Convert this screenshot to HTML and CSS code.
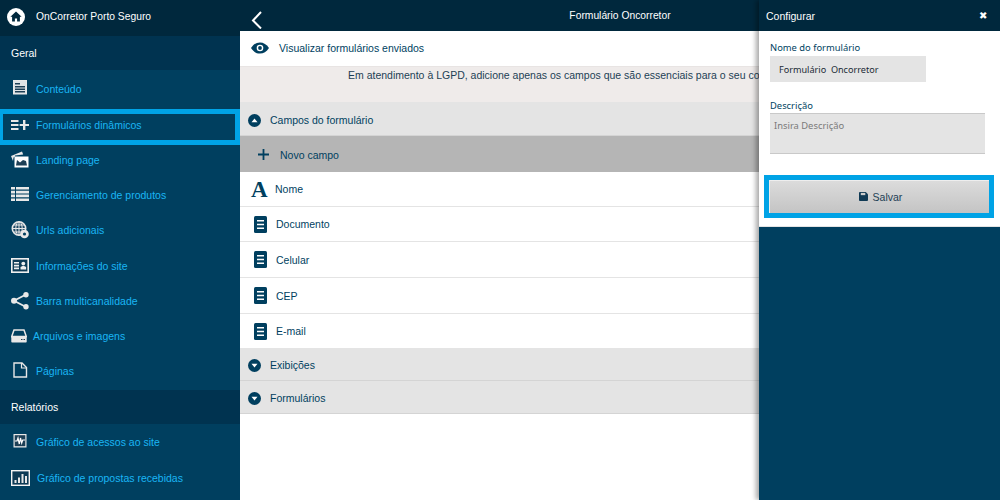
FILE: index.html
```html
<!DOCTYPE html>
<html lang="pt-BR">
<head>
<meta charset="utf-8">
<title>Formulário Oncorretor</title>
<link rel="stylesheet" href="styles.css">
</head>
<body>
<div class="app">
  <aside class="sidebar">
    <div class="brand">
      <svg class="brand-icon" viewBox="0 0 18 18"><circle cx="9" cy="9" r="9" fill="#fff"/><path d="M9 3.6 3.4 8.8h1.7v4.6h2.8v-3h2.2v3h2.8V8.8h1.7z" fill="#00283d"/></svg>
      <span>OnCorretor Porto Seguro</span>
    </div>
    <div class="section">Geral</div>
    <a class="item r-content up"><svg class="ic" viewBox="0 0 18 18"><rect x="2.500" y="0.500" width="13" height="13.500" fill="#dfe3e6" stroke="#e8e8e8"/><path d="M4 3h5v1.500H4zM4 6h10v1.500H4zM4 8.500h10V10H4zM4 11h10v1.500H4z" fill="#1d3f55"/></svg><span>Conteúdo</span></a>
    <a class="item active"><svg class="ic" viewBox="0 0 18 18"><path d="M0 4h7.500v1.900H0zM0 8h7.500v1.900H0zM0 12h7.500v1.900H0zM12 4h2.400v3.900H18v2.100h-3.600V14H12V10H8.600V7.900H12z" fill="#e8e8e8"/></svg><span>Formulários dinâmicos</span></a>
    <a class="item r-landing up"><svg class="ic" viewBox="0 0 18 18"><path d="M0 5 11 0.500l1.200 3L4 4.500v1L2.500 6.500 2 10z" fill="#e8e8e8"/><rect x="3.500" y="5.500" width="14" height="11" fill="#fff"/><path d="M5 14.500 6 9l3 2.500L12 9l3 1 1 4.500z" fill="#1d3f55"/></svg><span>Landing page</span></a>
    <a class="item r-products"><svg class="ic" viewBox="0 0 18 18"><path d="M0 1h4v2.600H0zM5 1h13v2.600H5zM0 4.800h4v2.600H0zM5 4.800h13v2.600H5zM0 8.600h4v2.600H0zM5 8.600h13v2.600H5zM0 12.400h4V15H0zM5 12.400h13V15H5z" fill="#e8e8e8"/></svg><span>Gerenciamento de produtos</span></a>
    <a class="item r-35 up"><svg class="ic" viewBox="0 0 18 18"><circle cx="8" cy="7.500" r="6.700" fill="#1d4a66" stroke="#e8e8e8" stroke-width="1.600"/><path d="M1.500 7.500h13M8 1v13M2.700 4h10.600M2.700 11h10.600" stroke="#e8e8e8" stroke-width="1"/><ellipse cx="8" cy="7.500" rx="3.200" ry="6.700" fill="none" stroke="#e8e8e8"/><circle cx="13.500" cy="13" r="4.300" fill="#e8e8e8"/><circle cx="13.500" cy="13" r="1.600" fill="#003f5f"/></svg><span>Urls adicionais</span></a>
    <a class="item r-info"><svg class="ic" viewBox="0 0 18 18"><rect x="0.800" y="1.800" width="16.400" height="13.400" fill="#0c3a55" stroke="#f0f0f0" stroke-width="1.600"/><path d="M3 5h5v1.600H3zM3 7.800h5v1.600H3zM3 10.600h5v1.600H3z" fill="#f0f0f0"/><circle cx="12.300" cy="6.600" r="1.900" fill="#f0f0f0"/><path d="M9.500 12.400V10l2-1h1.600l2 1v2.400z" fill="#f0f0f0"/></svg><span>Informações do site</span></a>
    <a class="item r-35 up"><svg class="ic" viewBox="0 0 18 18"><path d="M15 2.500 3 8.700 15 15" fill="none" stroke="#e8e8e8" stroke-width="1.800"/><circle cx="15" cy="2.800" r="2.700" fill="#e8e8e8"/><circle cx="3" cy="8.700" r="3" fill="#e8e8e8"/><circle cx="15" cy="14.700" r="2.700" fill="#e8e8e8"/></svg><span>Barra multicanalidade</span></a>
    <a class="item r-35 narrow up"><svg class="ic ic-16" viewBox="0 0 16 16"><path d="M3 2h10l2.300 6.500H.7z" fill="none" stroke="#e8e8e8" stroke-width="1.500"/><rect x=".3" y="8.500" width="15.400" height="6" rx=".8" fill="#e8e8e8"/><path d="M10 11h1.500v1H10zM12.500 11H14v1h-1.500z" fill="#1d3f55"/></svg><span>Arquivos e imagens</span></a>
    <a class="item r-pages"><svg class="ic" viewBox="0 0 18 18"><path d="M3 1h8l4.500 4.500V15H3z" fill="none" stroke="#e8e8e8" stroke-width="1.400"/><path d="M10.500 1v5h5" fill="none" stroke="#e8e8e8" stroke-width="1.200"/></svg><span>Páginas</span></a>
    <div class="section">Relatórios</div>
    <a class="item r-35"><svg class="ic" viewBox="0 0 18 18"><rect x="2.500" y="1" width="13" height="13.500" fill="#e8e8e8"/><rect x="3.700" y="2.200" width="10.600" height="11" fill="#1d3f55"/><path d="M4 8h2l1-3 1.300 6 1.200-6 1.200 5 1-3H14" fill="none" stroke="#fff" stroke-width="1.200"/></svg><span>Gráfico de acessos ao site</span></a>
    <a class="item r-last"><svg class="ic ic-wide" viewBox="0 0 19 16"><rect x=".7" y=".7" width="17.600" height="14.600" fill="#0c3a55" stroke="#f4f4f4" stroke-width="1.400"/><path d="M3.500 10h2v3h-2zM7 7.500h2V13H7zM10.500 4h2v9h-2zM14 6h2v7h-2z" fill="#e8e8e8"/></svg><span>Gráfico de propostas recebidas</span></a>
  </aside>

  <main class="main">
    <header class="topbar">
      <svg class="back" viewBox="0 0 12 18"><path d="M10 1 2 9.500l8 8" fill="none" stroke="#fff" stroke-width="2"/></svg>
      <h1>Formulário Oncorretor</h1>
    </header>
    <div class="view-row">
      <svg class="eye" viewBox="0 0 18 12"><path d="M0 6c2.500-3.800 5.500-5.600 9-5.600S15.500 2.200 18 6c-2.500 3.800-5.500 5.600-9 5.600S2.500 9.800 0 6z" fill="#003f5f"/><circle cx="9" cy="6" r="3.300" fill="#fff"/><circle cx="9" cy="6" r="1.900" fill="#003f5f"/></svg>
      <span>Visualizar formulários enviados</span>
    </div>
    <div class="notice">Em atendimento à LGPD, adicione apenas os campos que são essenciais para o seu contato.</div>
    <div class="group"><svg class="toggle" viewBox="0 0 13 13"><circle cx="6.500" cy="6.500" r="6.500" fill="#003f5f"/><path d="M3.500 8.200h6L6.500 4.500z" fill="#fff"/></svg><span>Campos do formulário</span></div>
    <div class="new-field"><svg class="plus" viewBox="0 0 11 11"><path d="M4.600 0h1.800v4.600H11v1.800H6.400V11H4.600V6.400H0V4.600h4.600z" fill="#003f5f"/></svg><span>Novo campo</span></div>
    <div class="field first"><span class="glyph-a">A</span><span>Nome</span></div>
    <div class="field"><svg class="doc" viewBox="0 0 13 17"><rect width="13" height="17" rx="1.500" fill="#003f5f"/><path d="M3 4h7v1.500H3zM3 7.700h7v1.500H3zM3 11.400h7v1.500H3z" fill="#fff"/></svg><span>Documento</span></div>
    <div class="field tall"><svg class="doc" viewBox="0 0 13 17"><rect width="13" height="17" rx="1.500" fill="#003f5f"/><path d="M3 4h7v1.500H3zM3 7.700h7v1.500H3zM3 11.400h7v1.500H3z" fill="#fff"/></svg><span>Celular</span></div>
    <div class="field tall"><svg class="doc" viewBox="0 0 13 17"><rect width="13" height="17" rx="1.500" fill="#003f5f"/><path d="M3 4h7v1.500H3zM3 7.700h7v1.500H3zM3 11.400h7v1.500H3z" fill="#fff"/></svg><span>CEP</span></div>
    <div class="field plain"><svg class="doc" viewBox="0 0 13 17"><rect width="13" height="17" rx="1.500" fill="#003f5f"/><path d="M3 4h7v1.500H3zM3 7.700h7v1.500H3zM3 11.400h7v1.500H3z" fill="#fff"/></svg><span>E-mail</span></div>
    <div class="group"><svg class="toggle" viewBox="0 0 13 13"><circle cx="6.500" cy="6.500" r="6.500" fill="#003f5f"/><path d="M3.500 4.800h6L6.500 8.500z" fill="#fff"/></svg><span>Exibições</span></div>
    <div class="group"><svg class="toggle" viewBox="0 0 13 13"><circle cx="6.500" cy="6.500" r="6.500" fill="#003f5f"/><path d="M3.500 4.800h6L6.500 8.500z" fill="#fff"/></svg><span>Formulários</span></div>
  </main>

  <section class="panel">
    <header class="panel-head"><span>Configurar</span><span class="close">✖</span></header>
    <div class="panel-body">
      <label class="lbl">Nome do formulário</label>
      <div class="input">Formulário&nbsp; Oncorretor</div>
      <label class="lbl lbl-2">Descrição</label>
      <div class="textarea">Insira Descrição</div>
      <div class="save-wrap">
        <button class="save"><svg class="disk" viewBox="0 0 10 10"><path d="M0 1a1 1 0 0 1 1-1h6.500L10 2.500V9a1 1 0 0 1-1 1H1a1 1 0 0 1-1-1z" fill="#103a55"/><rect x="2" y="1" width="5" height="2.500" fill="#ccc"/></svg>Salvar</button>
      </div>
    </div>
  </section>
</div>
</body>
</html>
```
FILE: styles.css
```css
* { box-sizing: border-box; }
html, body { margin: 0; height: 100%; overflow: hidden; }
body { font-family: "Liberation Sans", Arial, sans-serif; font-size: 10.5px; }
.app { position: relative; width: 1000px; height: 500px; display: flex; overflow: hidden; background: #fff; }

.sidebar { width: 240px; flex: none; height: 500px; background: #003f5f; display: flex; flex-direction: column; }
.brand { height: 36px; flex: none; background: #00283d; color: #fff; display: flex; align-items: center; padding: 0 0 3px 7px; gap: 11px; font-size: 10.3px; }
.brand-icon { width: 18px; height: 18px; flex: none; }
.section { height: 34px; flex: none; background: #003350; color: #fff; display: flex; align-items: center; padding-left: 11px; }
.item { display: flex; flex: none; align-items: center; gap: 7px; padding: 0 0 0 11px; color: #1ab6f5; height: 35px; }
.ic { width: 18px; height: 18px; flex: none; }
.up { padding-bottom: 2px; }
.r-content { height: 39px; }
.r-landing { height: 31px; }
.r-products { height: 37px; }
.r-35 { height: 35px; }
.r-info { height: 36px; }
.r-pages { height: 36px; padding-bottom: 2px; }
.r-last { height: 38px; }
.narrow { gap: 6px; }
.ic-16 { width: 16px; height: 16px; }
.ic-wide { width: 19px; height: 16px; }
.active { height: 36px; border-style: solid; border-color: #00a3e6; border-width: 5px 5px 5px 3px; padding: 0 0 5px 8px; }

.main { flex: 1; min-width: 0; display: flex; flex-direction: column; color: #003f5f; }
.topbar { height: 31px; flex: none; background: #00283d; color: #fff; display: flex; align-items: center; justify-content: center; position: relative; }
.topbar h1 { margin: 0; font-size: 10.3px; font-weight: 400; }
.back { position: absolute; left: 11px; top: 11px; width: 12px; height: 18px; }
.view-row { height: 35px; flex: none; display: flex; align-items: center; padding: 0 0 2px 11px; gap: 10px; background: #fff; }
.eye { width: 18px; height: 12px; }
.notice { height: 37px; flex: none; background: #efebea; color: #1d3f55; white-space: nowrap; padding: 1px 0 0 108px; border-bottom: 1px solid #e4e4e4; border-top: 1px solid #e8e4e3; line-height: 14px; }
.group { height: 33px; background: #e4e4e4; display: flex; align-items: center; padding: 2px 0 0 8px; gap: 9px; border-bottom: 1px solid #d4d4d4; flex: none; }
.toggle { width: 13px; height: 13px; }
.new-field { height: 36px; flex: none; background: #b5b5b5; display: flex; align-items: center; padding: 1px 0 0 18px; gap: 11px; }
.plus { width: 11px; height: 11px; }
.field { height: 35px; flex: none; display: flex; align-items: center; padding-left: 14px; gap: 9px; border-bottom: 1px solid #e4e4e4; background: #fff; }
.field.tall { height: 36px; }
.field.plain { height: 34px; border-bottom: 0; }
.field.first { padding-left: 11px; gap: 7px; }
.doc { width: 13px; height: 17px; }
.glyph-a { font-family: "Liberation Serif", serif; font-weight: 700; font-size: 23px; line-height: 1; width: 17px; }

.panel { position: absolute; top: 0; right: 0; width: 241px; height: 500px; background: #003f5f; box-shadow: -3px 0 5px rgba(0, 0, 0, .35); display: flex; flex-direction: column; }
.panel-head { height: 31px; flex: none; background: #00283d; color: #fff; display: flex; align-items: center; justify-content: space-between; padding: 0 13px 0 7px; }
.close { font-size: 10px; }
.panel-body { height: 196px; flex: none; background: #fff; padding: 9px 15px 0 11px; border-bottom: 1px solid #e4e4e4; color: #003f5f; font-family: "Noto Sans", sans-serif; font-size: 9.4px; }
.lbl { display: block; height: 15px; line-height: 15px; margin-bottom: 1px; }
.lbl-2 { margin-top: 16px; margin-bottom: 0; }
.input { width: 156px; height: 26px; background: #e4e4e4; color: #1b2b36; display: flex; align-items: center; padding-left: 9px; font-size: 9.1px; }
.textarea { height: 41px; background: #e4e4e4; border-top: 1px solid #c9c9c9; border-bottom: 1px solid #c9c9c9; color: #7a7a7a; padding: 5px 3px 0 4px; line-height: 14px; }
.save-wrap { margin: 21px 0 0 -6px; height: 43px; border: 5px solid #00a3e6; width: 230px; }
.save { width: 100%; height: 100%; padding: 0 0 0 3px; border: 0; background: linear-gradient(#dcdcdc, #c4c4c4); color: #1d3f55; display: flex; align-items: center; justify-content: center; gap: 5px; font-family: "Liberation Sans", Arial, sans-serif; font-size: 10.5px; box-shadow: inset 1px 1px 0 #eee; }
.disk { width: 9px; height: 9px; }
```
